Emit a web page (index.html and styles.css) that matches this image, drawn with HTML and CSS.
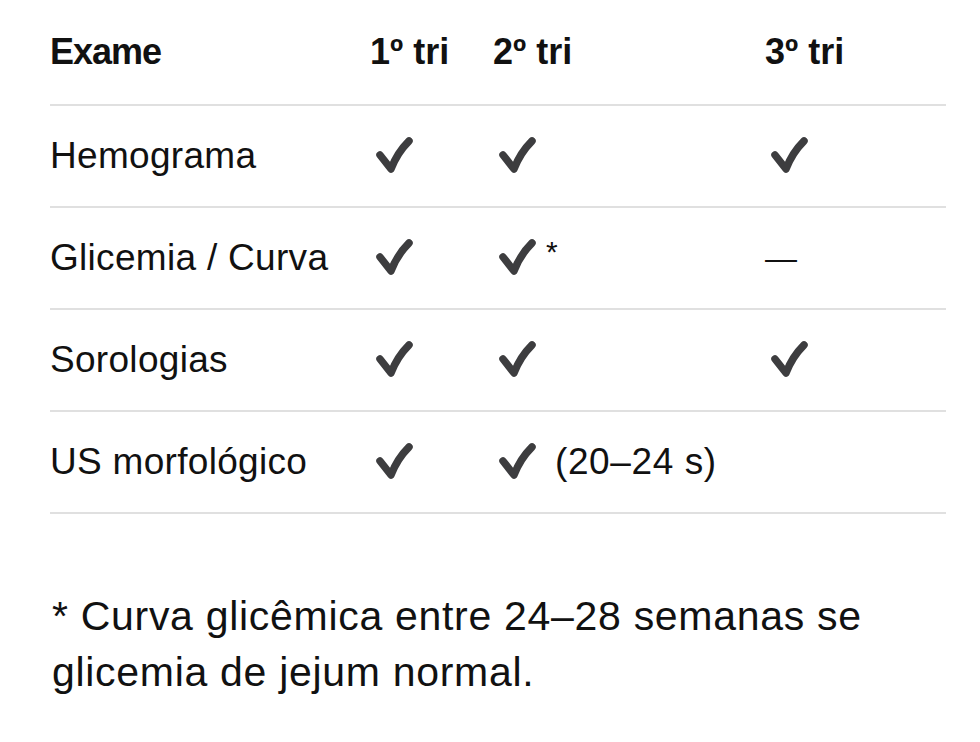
FILE: index.html
```html
<!DOCTYPE html>
<html lang="pt">
<head>
<meta charset="utf-8">
<title>Exames por trimestre</title>
<link rel="stylesheet" href="styles.css">
</head>
<body>
<svg width="0" height="0" class="defs" aria-hidden="true">
  <defs>
    <symbol id="chk" viewBox="0 0 40 40">
      <path d="M6 19 L17 33 Q23 17 35 5" fill="none" stroke="#3d3d3f" stroke-width="7.5" stroke-linecap="round" stroke-linejoin="round"/>
    </symbol>
  </defs>
</svg>
<main class="page">
  <div class="table">
    <div class="row head">
      <div class="cell">Exame</div>
      <div class="cell">1º tri</div>
      <div class="cell">2º tri</div>
      <div class="cell">3º tri</div>
    </div>
    <div class="row">
      <div class="cell">Hemograma</div>
      <div class="cell"><svg class="check"><use href="#chk"/></svg></div>
      <div class="cell"><svg class="check"><use href="#chk"/></svg></div>
      <div class="cell"><svg class="check"><use href="#chk"/></svg></div>
    </div>
    <div class="row">
      <div class="cell">Glicemia / Curva</div>
      <div class="cell"><svg class="check"><use href="#chk"/></svg></div>
      <div class="cell"><svg class="check"><use href="#chk"/></svg><span class="star">*</span></div>
      <div class="cell"><span class="dash">—</span></div>
    </div>
    <div class="row">
      <div class="cell">Sorologias</div>
      <div class="cell"><svg class="check"><use href="#chk"/></svg></div>
      <div class="cell"><svg class="check"><use href="#chk"/></svg></div>
      <div class="cell"><svg class="check"><use href="#chk"/></svg></div>
    </div>
    <div class="row">
      <div class="cell">US morfológico</div>
      <div class="cell"><svg class="check"><use href="#chk"/></svg></div>
      <div class="cell"><svg class="check"><use href="#chk"/></svg><span class="note">(20–24 s)</span></div>
      <div class="cell"></div>
    </div>
  </div>
  <p class="foot">* Curva glicêmica entre 24–28 semanas se glicemia de jejum normal.</p>
</main>
</body>
</html>
```
FILE: styles.css
```css
html, body {
  margin: 0;
  padding: 0;
  background: #ffffff;
}
.defs {
  position: absolute;
  width: 0;
  height: 0;
}
.page {
  padding-left: 50px;
  font-family: "Liberation Sans", Arial, sans-serif;
  color: #111111;
}
.table {
  width: 896px;
}
.row {
  display: grid;
  grid-template-columns: 320px 123px 272px 1fr;
  height: 100px;
  border-bottom: 2px solid #e0e0e0;
  font-size: 37px;
  letter-spacing: 0.3px;
}
.row.head {
  height: 104px;
  font-weight: bold;
  font-size: 36px;
  letter-spacing: 0;
}
.row.head .cell:first-child {
  letter-spacing: -1px;
}
.cell {
  display: flex;
  align-items: center;
  white-space: nowrap;
}
.check {
  width: 40px;
  height: 40px;
  margin-left: 4px;
  flex: none;
}
.star {
  font-size: 30px;
  margin-left: 9px;
  margin-top: -12px;
}
.note {
  margin-left: 18px;
  letter-spacing: 0.6px;
}
.dash {
  font-size: 32px;
}
.foot {
  margin: 74px 0 0 2px;
  font-size: 41px;
  line-height: 56px;
  width: 880px;
  letter-spacing: 0.7px;
}
```
